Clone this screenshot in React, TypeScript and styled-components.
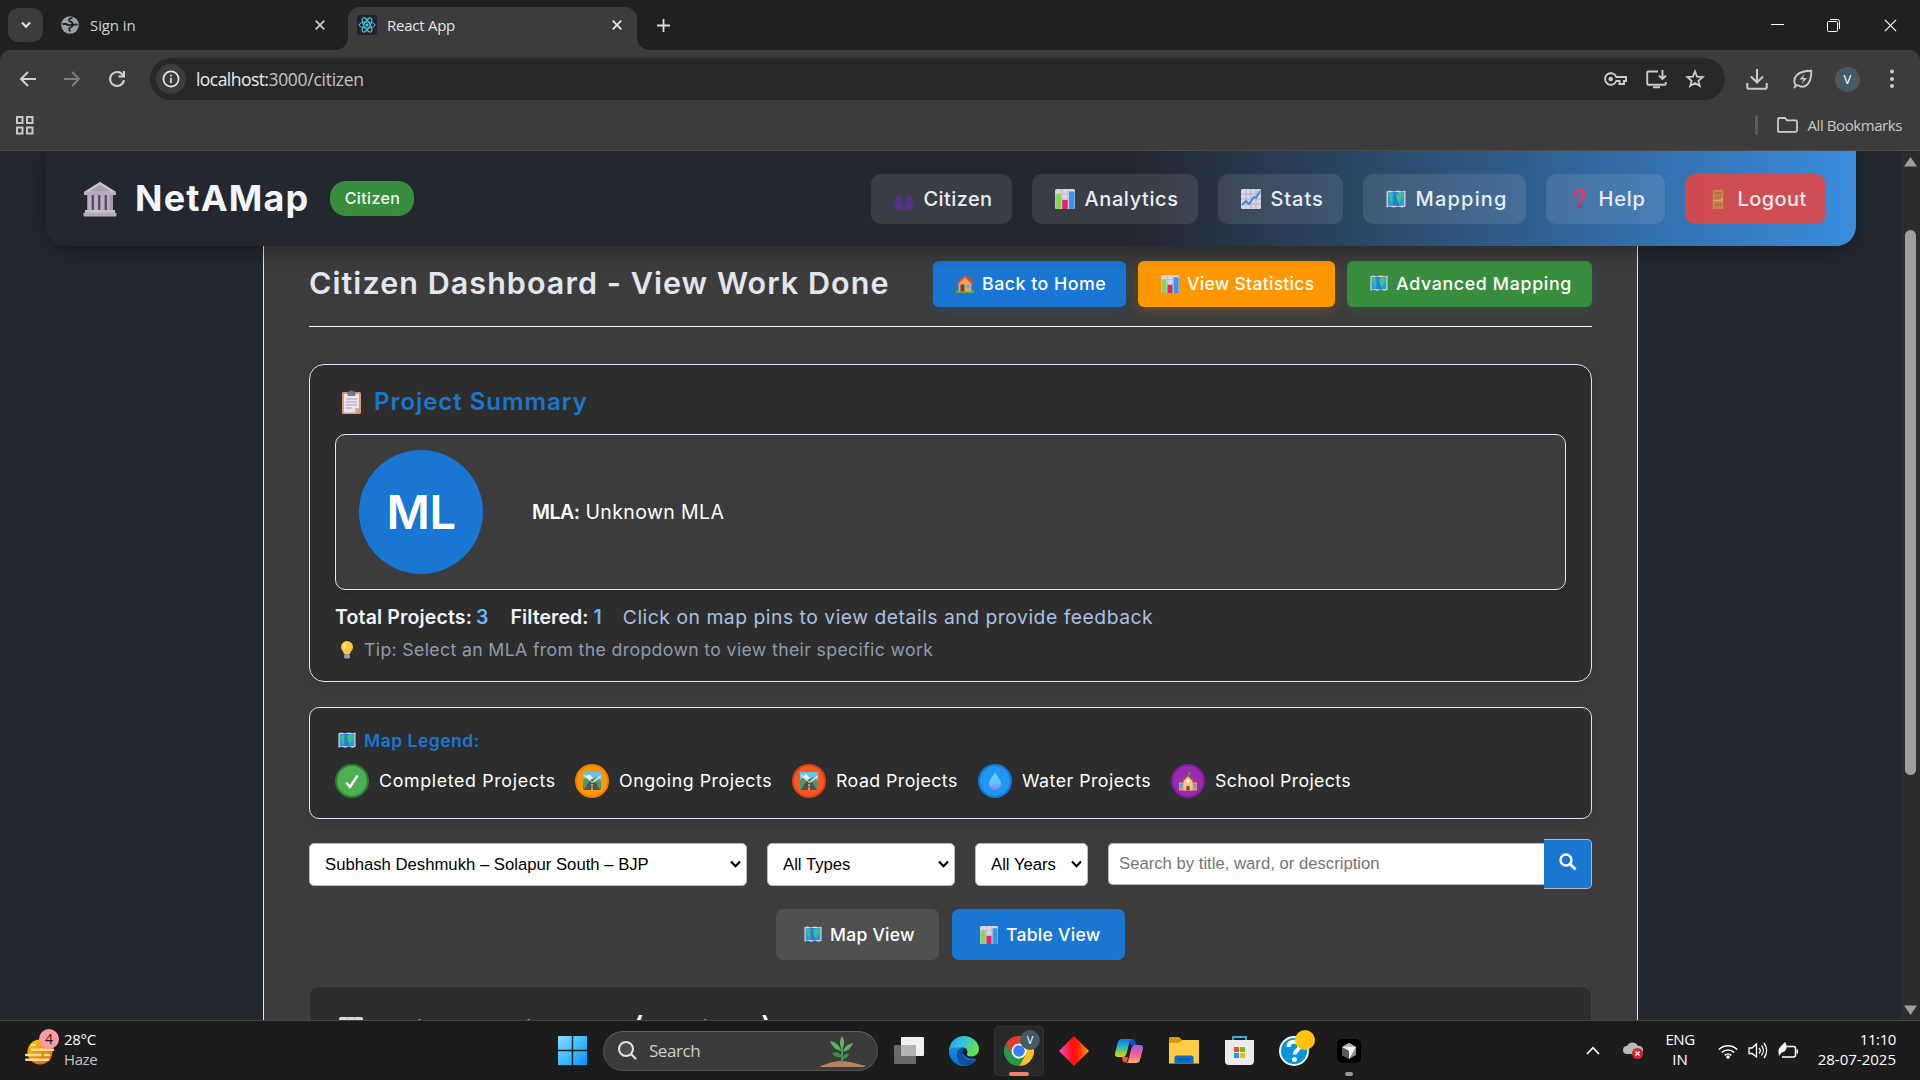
import React from "react";
import styled, { createGlobalStyle, css } from "styled-components";

const Global = createGlobalStyle`
  * { box-sizing: border-box; }
  html, body { margin: 0; background: #1c1c1c; overflow: hidden; }
  svg { display: block; flex: none; }
`;

const POP = `Inter, "Open Sans", sans-serif`;
const SEGOE = `"Open Sans", "Noto Sans", sans-serif`;
const ARIAL = `"Liberation Sans", Arial, sans-serif`;

const T = styled.span<{ $s: number; $w?: number; $c?: string; $ls?: number; $f?: string; $pt?: number; $pb?: number }>`
  font-family: ${(p) => p.$f || POP};
  font-size: ${(p) => p.$s}px;
  font-weight: ${(p) => p.$w || 400};
  color: ${(p) => p.$c || "#fff"};
  letter-spacing: ${(p) => p.$ls || 0}px;
  padding-top: ${(p) => p.$pt || 0}px;
  padding-bottom: ${(p) => p.$pb || 0}px;
  white-space: pre;
  line-height: 1.2;
`;

const Screen = styled.div`
  width: 1920px; height: 1080px; display: flex; flex-direction: column; overflow: hidden;
`;

/* ---------- browser chrome ---------- */
const TabStrip = styled.div`
  height: 50px; background: #1f2120; display: flex; padding-left: 8px; flex: none;
`;
const TabSearch = styled.div`
  width: 35px; height: 34px; margin-top: 8px; border-radius: 10px; background: #3c3c3c;
  display: grid; place-items: center;
`;
const Tab = styled.div<{ $active?: boolean }>`
  display: flex; align-items: center; height: 43px; margin-top: 7px; padding-bottom: 7px; position: relative;
  ${(p) => p.$active
    ? css`width: 289px; margin-left: 14px; padding-left: 9px; padding-right: 15px; border-radius: 12px 12px 0 0; background: #3c3c3c;
        &::before, &::after { content: ""; position: absolute; bottom: 0; width: 12px; height: 12px; }
        &::before { left: -12px; background: radial-gradient(circle at 0 0, transparent 11.5px, #3c3c3c 12px); }
        &::after { right: -12px; background: radial-gradient(circle at 100% 0, transparent 11.5px, #3c3c3c 12px); }`
    : css`width: 291px; padding-left: 18px; padding-right: 9px;`}
`;
const TabTitle = styled.div<{ $ml: number }>`flex: 1; display: flex; margin-left: ${(p) => p.$ml}px;`;
const Favicon = styled.div`
  width: 20px; height: 20px; border-radius: 3px; background: #20232a; display: grid; place-items: center;
`;
const NewTab = styled.div`width: 52px; display: grid; place-items: center;`;
const WinControls = styled.div`margin-left: auto; width: 172px; display: grid; grid-template-columns: 58px 55px 59px; place-items: center;`;

const ToolbarWrap = styled.div`background: #1f2120; height: 101px; flex: none;`;
const Toolbar = styled.div`
  height: 101px; background: #3c3c3c; border-radius: 10px 10px 0 0; border-bottom: 1px solid #4b4b4b;
`;
const NavRow = styled.div`display: flex; align-items: center; height: 58px;`;
const NavIcons = styled.div`width: 150px; display: flex; gap: 24px; padding-left: 18px;`;
const Omnibox = styled.div`
  width: 1575px; height: 42px; border-radius: 21px; background: #282828; display: flex; align-items: center;
  padding: 0 20px 0 6px;
`;
const InfoDot = styled.div`width: 30px; height: 30px; border-radius: 50%; background: #3c3c3c; display: grid; place-items: center; margin-right: 10px;`;
const OmniRight = styled.div`margin-left: auto; display: flex; align-items: center; gap: 18px;`;
const ToolRight = styled.div`display: flex; align-items: center; padding-left: 21px;`;
const Profile = styled.div<{ $d: number; $fs: number }>`
  width: ${(p) => p.$d}px; height: ${(p) => p.$d}px; border-radius: 50%; background: #455a64; color: #fff;
  display: grid; place-items: center; font: ${(p) => p.$fs}px ${SEGOE}; line-height: 1;
`;
const Bookmarks = styled.div`height: 42px; padding: 0 18px 8px 15px; display: flex; align-items: center;`;
const BmDivider = styled.div`width: 3px; height: 20px; border-radius: 2px; background: #5c5c5c; margin: 0 19px 0 auto;`;

/* ---------- page ---------- */
const Viewport = styled.div`height: 869px; flex: none; display: flex; background: #23272f; overflow: hidden;`;
const Page = styled.div`width: 1901px; height: 869px; overflow: hidden;`;
const AppNav = styled.nav`
  position: relative; z-index: 2;
  margin: 0 45px 0 46px; height: 95px; border-radius: 0 0 20px 20px; padding: 0 30px 0 35px;
  background: linear-gradient(90deg, #23272f 60%, #3a8dde 100%);
  box-shadow: 0 4px 20px rgba(0,0,0,.35);
  display: flex; align-items: center;
`;
const Badge = styled.div`
  width: 84px; height: 35px; border-radius: 16px; background: #388e3c; display: flex; align-items: center; justify-content: center; margin-left: 21px;
`;
const Menu = styled.div`margin-left: auto; display: flex; gap: 20px;`;
const MenuItem = styled.div<{ $wd: number; $danger?: boolean }>`
  width: ${(p) => p.$wd}px; height: 50px; border-radius: 10px; padding-left: 20px; display: flex; align-items: center; gap: 6.5px;
  background: ${(p) => (p.$danger ? "rgba(229,70,66,.87)" : "rgba(255,255,255,.1)")};
`;
const Slot = styled.div<{ $wd: number }>`width: ${(p) => p.$wd}px; display: flex; justify-content: center; flex: none;`;

const Container = styled.main`
  width: 1375px; height: 900px; margin-left: 263px; background: #3c3c3c; border: solid #e0e3ff; border-width: 0 1px;
  padding: 15px 45px 0;
`;
const HeaderRow = styled.div`display: flex; align-items: center; justify-content: space-between; height: 66px; padding-bottom: 20px; border-bottom: 1px solid #f0f2ff;`;
const HeaderButtons = styled.div`display: flex; gap: 12px;`;
const ActionBtn = styled.div<{ $wd: number; $bg: string; $glow: string }>`
  width: ${(p) => p.$wd}px; height: 46px; border-radius: 6px; background: ${(p) => p.$bg};
  box-shadow: 0 4px 12px ${(p) => p.$glow}; padding-left: 20px; display: flex; align-items: center; gap: 6px;
`;
const Card = styled.section<{ $h: number; $mt: number; $r: number }>`
  height: ${(p) => p.$h}px; margin-top: ${(p) => p.$mt}px; border-radius: ${(p) => p.$r}px; background: #2d2d2d;
  border: 1px solid #e0e3ff; padding: 0 25px; box-shadow: 0 3px 10px rgba(0,0,0,.12);
`;
const CardTitle = styled.div`height: 69px; display: flex; align-items: center; gap: 13px; padding: 5px 0 0 7px;`;
const MlaBox = styled.div`
  height: 156px; border: 1px solid #e0e3ff; border-radius: 10px; background: #3c3c3c; display: flex; align-items: center; padding-left: 23px;
  box-shadow: 0 3px 10px rgba(0,0,0,.12);
`;
const Avatar = styled.div`
  width: 124px; height: 124px; border-radius: 50%; background: #1976d2; display: grid; place-items: center; margin-right: 49px;
`;
const StatsRow = styled.div`height: 32px; margin-top: 12px; display: flex; align-items: center;`;
const Gap = styled.div<{ $wd: number }>`width: ${(p) => p.$wd}px; flex: none;`;
const TipRow = styled.div`height: 32px; display: flex; align-items: center; padding-left: 6px; gap: 11px;`;
const LegendTitle = styled.div`height: 30px; margin-top: 17px; display: flex; align-items: center; gap: 8px; padding-left: 3px;`;
const LegendRow = styled.div`display: flex; gap: 20px; margin-top: 9px;`;
const LegendItem = styled.div<{ $wd: number }>`width: ${(p) => p.$wd}px; display: flex; align-items: center; gap: 10px;`;
const Pin = styled.div<{ $bg: string; $bd: string }>`
  width: 34px; height: 34px; border-radius: 50%; background: ${(p) => p.$bg}; border: 2.5px solid ${(p) => p.$bd};
  display: grid; place-items: center; flex: none;
`;
const Filters = styled.div`display: flex; align-items: center; margin-top: 20px; height: 50px;`;
const Select = styled.div<{ $wd: number }>`
  width: ${(p) => p.$wd}px; height: 43px; margin-right: 20px; border: 1px solid #b9b9b9; border-radius: 5px; background: #fff;
  display: flex; align-items: center; justify-content: space-between; padding: 0 5px 0 15px;
`;
const SearchBox = styled.div`
  flex: 1; height: 42px; margin-bottom: 1px; background: #fff; border: 1px solid #b9b9b9; border-right: 0; border-radius: 5px 0 0 5px;
  display: flex; align-items: center; padding-left: 10px;
`;
const SearchBtn = styled.div`
  width: 48px; height: 50px; background: #1976d2; border: 1px solid #b9b9b9; border-left: 0; border-radius: 0 5px 5px 0;
  display: grid; place-items: center; padding-bottom: 5px;
`;
const ViewRow = styled.div`display: flex; justify-content: center; gap: 13px; margin-top: 20px;`;
const ViewBtn = styled.div<{ $wd: number; $bg: string }>`
  width: ${(p) => p.$wd}px; height: 51px; border-radius: 7px; background: ${(p) => p.$bg}; padding-left: 25px; display: flex; align-items: center; gap: 5px;
`;
const TableCard = styled.section`
  height: 120px; margin-top: 26px; border-radius: 10px; background: #2d2d2d; border: 1px solid #414141;
  padding: 28px 0 0 29px; display: flex; align-items: flex-start; gap: 12px;
`;
const TableIcon = styled.div`padding-top: 2px;`;
const Paren = styled.span`font-size: 31px; font-weight: 500; line-height: 0; letter-spacing: 0;`;
const ScrollBar = styled.div`
  width: 19px; background: #2c2c2c; display: flex; flex-direction: column; align-items: center; justify-content: space-between; padding: 6px 0 5px;
`;
const ScrollTop = styled.div`display: flex; flex-direction: column; align-items: center; gap: 63px;`;
const Thumb = styled.div`width: 11px; height: 545px; border-radius: 6px; background: #9f9f9f;`;

/* ---------- taskbar ---------- */
const Taskbar = styled.div`
  height: 60px; flex: none; background: #1c1c1c; border-top: 1px solid #434343; display: flex; align-items: center; padding: 0 24px 0 25px;
`;
const Weather = styled.div`display: flex; width: 533px; gap: 9px; align-items: center;`;
const Stack = styled.div<{ $a?: string }>`
  display: flex; flex-direction: column; height: 41px; padding-bottom: 2px; justify-content: space-between; align-items: ${(p) => p.$a || "flex-start"};
  & > span { height: 19px; line-height: 19px; }
`;
const SearchPill = styled.div`
  width: 275px; height: 40px; margin: 0 16px; border-radius: 20px; background: #3b3b3b; border: 1px solid #505050; border-top-color: #616161;
  display: flex; align-items: center; padding: 0 11px 0 14px;
`;
const PlantBox = styled.div`margin-left: auto;`;
const Apps = styled.div`display: flex; align-items: center; gap: 5px; margin-left: -10px;`;
const AppSlot = styled.div<{ $on?: boolean }>`
  width: 50px; height: 50px; border-radius: 5px; display: grid; place-items: center; position: relative;
  ${(p) => p.$on && "background:#292929; box-shadow: inset 0 0 0 1px #333;"}
`;
const RunDot = styled.div<{ $wd: number; $bg: string }>`
  position: absolute; bottom: 0; left: calc(50% - ${(p) => p.$wd / 2}px); width: ${(p) => p.$wd}px; height: 4px; border-radius: 2px; background: ${(p) => p.$bg};
`;
const Corner = styled.div<{ $t: number; $r: number }>`position: absolute; right: ${(p) => p.$r}px; top: ${(p) => p.$t}px;`;
const WeatherIcon = styled.div`position: relative;`;
const Count = styled.div`
  width: 20px; height: 20px; border-radius: 50%; background: #ff99a4; color: #1c1c1c; text-align: center; font: 14px/20px ${SEGOE};
`;
const Tray = styled.div`margin-left: auto; display: flex; align-items: center;`;

/* ---------- drawings ---------- */
const S = ({ w, h, vb, children }: any) => (
  <svg width={w} height={h} viewBox={vb || `0 0 ${w} ${h}`} fill="none">{children}</svg>
);
const X = ({ s = 10, c = "#dcdcdc", w = 1.8 }) => (
  <S w={s} h={s} vb="0 0 10 10"><path d="M.7 .7l8.600 8.600M9.300 .7L.7 9.300" stroke={c} strokeWidth={w} /></S>
);
const Globe = () => (
  <S w={18} h={18}><circle cx="9" cy="9" r="8.800" fill="#9aa0a6" />
    <path d="M11.500 2.200C9 2 7.500 3.200 8 4.500c.6 1.500 3.500 1 3.500 3 0 1.800-2.500 1.500-4 1.700-1.300.2-1.300-1.200-2.500-1.200H1.500M16.500 9c-1.500-1-4.500-.5-5 .8-.5 1.500-2 1.200-3 2.200-1 1.200.5 2 .3 3.700" stroke="#1f2120" strokeWidth="1.800" /></S>
);
const ReactLogo = () => (
  <S w={18} h={18} vb="-9 -9 18 18"><g stroke="#4fc3dc" strokeWidth="1" transform="rotate(0)"><ellipse rx="8" ry="3" /><ellipse rx="8" ry="3" transform="rotate(60)" /><ellipse rx="8" ry="3" transform="rotate(120)" /></g><circle r="1.600" fill="#4fc3dc" /></S>
);
const Bank = () => (
  <S w={34} h={36}><path d="M17 1L33 11v3H1v-3z" fill="#b7adbd" /><path d="M17 1L33 11H1z" fill="#c9c1cd" /><path d="M17 4l11 6.500H6z" fill="#a99fb1" />
    <rect x="4" y="14" width="26" height="17" fill="#5b4668" />
    {[4, 10.5, 17, 23.5].map((x) => <rect key={x} x={x + 0.4} y="14" width="4.200" height="16" fill="#b9afc0" />)}
    <rect x="26.500" y="14" width="3.500" height="16" fill="#a69bae" /><rect x="2" y="29" width="30" height="3" fill="#c9c0ce" /><rect x="0.500" y="31.500" width="33" height="4" rx="1" fill="#b4a8bb" /></S>
);
const People = () => (
  <S w={20} h={26}><g fill="#53318a"><circle cx="5" cy="12" r="3.300" /><circle cx="15" cy="12" r="3.300" /><path d="M.5 24v-4.500c0-3 1.500-4 4.500-4s4.500 1 4.500 4V24zM10.500 24v-4.500c0-3 1.500-4 4.500-4s4.500 1 4.500 4V24z" /></g></S>
);
const Bars = ({ s = 20 }) => (
  <S w={s} h={s} vb="0 0 20 20"><rect width="20" height="20" rx="1.500" fill="#dcd5e4" /><path d="M0 5h20M0 10h20M0 15h20M7 0v20M13 0v20" stroke="#b9aec6" strokeWidth=".7" />
    <rect x=".5" y="5" width="5.500" height="15" fill="#86d45c" /><rect x="7.200" y="11" width="5.500" height="9" fill="#e2246c" /><rect x="14" y="2.500" width="5.500" height="17.500" fill="#3597ea" /></S>
);
const Chart = () => (
  <S w={20} h={20}><rect width="20" height="20" rx="1.500" fill="#dcd5e4" /><path d="M0 5h20M0 10h20M0 15h20M5 0v20M10 0v20M15 0v20" stroke="#a99cba" strokeWidth=".7" />
    <path d="M1 16l4-4 3 3 5-7 2 1 4-7" stroke="#2f8be0" strokeWidth="1.800" /></S>
);
const MapIcon = ({ s = 20 }) => (
  <S w={s} h={s * 0.9} vb="0 0 20 18"><path d="M.5 1.500l3.300-1 4.200 1 4-1 4.200 1 3.300-1v16l-3.300 1-4.200-1-4 1-4.200-1-3.300 1z" fill="#d9cfe6" /><path d="M1.800 2.500L7 2l6 .5 5.200-.5v13.500l-5.200.5-6-.5-5.200.5z" fill="#2c9be6" /><path d="M7 2l6 .5V16l-6-.5z" fill="#2383d3" />
    <path d="M2.500 4l4-.7 1 1.700-2 2.500L7 9.500 6 13.500 4.500 11 4 8 2.500 6zM10.500 4l3-1 4 .5v4l-2 1-1 2.500-1.500 2-1.500-2-1-3.500z" fill="#3ec47e" /></S>
);
const Question = () => (
  <S w={13} h={20}><path d="M2 5.500C2 3 4 1.500 6.500 1.500S11.200 3 11.200 5.500c0 3-4.500 3.300-4.500 7" stroke="#f0325c" strokeWidth="3" strokeLinecap="round" /><circle cx="6.700" cy="17.600" r="1.900" fill="#e8213f" /></S>
);
const Door = () => (
  <S w={12} h={20}><rect width="12" height="20" fill="#b3693c" /><rect x="1" y="1" width="10" height="19" fill="#cb8352" /><path d="M2.500 3h7v2.500h-7zM2.500 7.500h7v2h-7zM2.500 14h7v3h-7z" fill="#b56f43" /><path d="M1 11.500h10" stroke="#e2a06c" /><circle cx="9.800" cy="10" r=".9" fill="#f6c24a" /></S>
);
const House = () => (
  <S w={18} h={18}><rect y="15.500" width="18" height="2.500" fill="#57a84f" /><path d="M2.500 8L9 2l6.500 6v8.500h-13z" fill="#efa35d" /><path d="M13 1h2.500v5L13 4z" fill="#b9503c" /><path d="M.8 9L9 1.200 17.200 9" stroke="#d6552f" strokeWidth="2" /><rect x="4.500" y="9.500" width="4" height="7" fill="#7b4030" /><rect x="10.500" y="9.500" width="3.800" height="3.800" fill="#4fb2ee" /></S>
);
const Clipboard = () => (
  <S w={19} h={24}><rect y="2" width="19" height="22" rx="1.500" fill="#dd9a6b" /><path d="M2 4h15v14l-4 4.500H2z" fill="#ece4f2" /><path d="M17 18h-4v4.500z" fill="#bfaecb" /><rect x="5.500" y="1.500" width="8" height="4.500" rx="1" fill="#7f7484" /><circle cx="9.500" cy="1.800" r="1.500" fill="#7f7484" /><path d="M4 9h11M4 12h11M4 15h11M4 18h6" stroke="#a79bb2" /></S>
);
const Bulb = () => (
  <S w={12} h={18}><path d="M6 0a6 6 0 0 1 6 6c0 3-2.500 4-3 7H3C2.500 10 0 9 0 6a6 6 0 0 1 6-6z" fill="#ffc83d" /><path d="M6 1.500c-2.500 0-4 2-4 4.500l2 3 1-6z" fill="#ffe68a" /><rect x="3" y="13" width="6" height="4.500" rx="1.500" fill="#a692b5" /></S>
);
const Road = () => (
  <S w={18} h={18}><rect width="18" height="18" fill="#62c5f2" /><path d="M0 8l5-4 4 3 4-2 5 4v9H0z" fill="#4a9a62" /><path d="M2 5l4-3 4 4-2 3z" fill="#e7f4fb" /><path d="M7.500 7.500h3L17 18H1z" fill="#50505c" /><path d="M9 9v2M9 12v2.500M9 15.500V18" stroke="#ffcf3a" strokeWidth="1.300" /><path d="M1 3l7 6M18 4l-8 6" stroke="#d8dde2" strokeWidth="1.600" /></S>
);
const Check = () => <S w={14} h={15}><path d="M1.300 8.500L5 13 12.500 1.500" stroke="#fff" strokeWidth="2.400" /></S>;
const Drop = () => (
  <S w={14} h={18}><defs><linearGradient id="dr" x2="0" y2="1"><stop stopColor="#5ed0fb" /><stop offset=".6" stopColor="#69c3fb" /><stop offset="1" stopColor="#7c86f2" /></linearGradient></defs><path d="M7 0c1 3.500 6 7 6 11.500A6 6 0 0 1 7 18a6 6 0 0 1-6-6.500C1 7 6 3.500 7 0z" fill="url(#dr)" /></S>
);
const School = () => (
  <S w={18} h={19}><path d="M9 0v5" stroke="#7a4b39" /><path d="M9 .5h3v2H9z" fill="#3ea557" /><rect x="0" y="10" width="18" height="8.500" fill="#e59a63" /><path d="M4.500 8L9 3.500 13.500 8v10.500h-9z" fill="#f6c492" /><path d="M4 8.500L9 3.500l5 5M0 9.800h4.500M13.500 9.800H18" stroke="#a55a3d" strokeWidth="1.300" /><circle cx="9" cy="9" r="1.600" fill="#fff" /><path d="M7.300 14h3.400v4.500H7.300z" fill="#96482f" /><path d="M1 12h2.500v4H1zM14.500 12H17v4h-2.500z" fill="#45a8e6" /></S>
);
const Chevron = () => <S w={11} h={8}><path d="M1 1.500l4.500 4.700L10 1.500" stroke="#000" strokeWidth="2.200" /></S>;
const Win = () => (
  <S w={29} h={29}><defs><linearGradient id="wn" x2="1" y2="1"><stop stopColor="#86dcff" /><stop offset=".5" stopColor="#40bdfb" /><stop offset="1" stopColor="#0a90fb" /></linearGradient></defs><path d="M0 0h13.800v13.800H0zM15.200 0H29v13.800H15.200zM0 15.200h13.800V29H0zM15.200 15.200H29V29H15.200z" fill="url(#wn)" /></S>
);
const Plant = () => (
  <S w={46} h={32}><path d="M0 31c6-1 10-5 21-5s16 4 25 4.500l-2 1.500H1z" fill="#b98261" /><path d="M22 28V12" stroke="#3f9b4b" strokeWidth="2" /><g fill="#5db65c"><path d="M22 1c3 5 2.500 9 0 13-2.500-4-3-8 0-13z" /><path d="M10 6c6 1 9 4 11.500 10C15 15 12 11 10 6z" /><path d="M33 8c-5 1-8 3-10 8.500 6-.5 8-4 10-8.500z" /></g><g fill="#3a8f49"><path d="M12 18c5-2 8 0 10 4-4 1-8 0-10-4z" /><path d="M29 19c-4-1-6 1-7 5 4 0 6-2 7-5z" /></g></S>
);
const TaskView = () => (
  <S w={30} h={27}><rect y="8" width="22" height="19" rx="1" fill="#6a6a6a" /><rect x="7" width="23" height="19" rx="1" fill="#f1f1f1" /><rect x="7" y="8" width="15" height="11" fill="#b4b4b4" /></S>
);
const Edge = () => (
  <S w={30} h={30}><defs><linearGradient id="e1" x2="1" y2=".4"><stop stopColor="#1b9de2" /><stop offset=".5" stopColor="#33c3dd" /><stop offset="1" stopColor="#62e04f" /></linearGradient><linearGradient id="e2" x2="0" y2="1"><stop stopColor="#1a8fe0" /><stop offset="1" stopColor="#0a6fd0" /></linearGradient></defs>
    <path d="M0 13A15 15 0 0 0 15 30c5 0 9-2 12-6L22 15 4 8z" fill="url(#e2)" /><path d="M0 14C1 5 7.500 0 15 0c8 0 15 6 15 13 0 5-4 7.500-8 7.500-3.500 0-5-1.500-4-3 1.500-2.500-.5-6-4-6C8 11.500 2 11 0 14z" fill="url(#e1)" /><path d="M13 11.500c-5 1.500-6 7-4.500 11.500 2 5 6 7.300 10 6.500 4-1 7-4 8.500-6.500-8 3-13-1-12.500-6 0-1.500.5-2.500 1.500-3.500z" fill="#0c4f9e" /><path d="M14.500 12.500c-1.500 2-1 8 6 10 3 .7 5.500 0 7.500-1l1.500-3.500c-2 2-4.500 2.500-7.500 2.500-3.500 0-5-1.500-4-3 1.200-2-.5-5-3.500-5z" fill="#1c1c1c" /></S>
);
const ChromeLogo = () => (
  <S w={30} h={30} vb="-15 -15 30 30">
    <path d="M0-7.500H13A15 15 0 0 1 0 15L6.500 3.700z" fill="#fcc31e" />
    <path d="M-6.500 3.700L-13-7.500A15 15 0 0 0 0 15L6.500 3.700z" fill="#279847" />
    <path d="M0-7.500H13A15 15 0 0 0-13-7.500L-6.500 3.700z" fill="#e33b2e" />
    <circle r="7.500" fill="#fff" /><circle r="5.800" fill="#3a7ff0" /></S>
);
const Diamond = () => (
  <S w={30} h={30}><defs><linearGradient id="dm"><stop stopColor="#f14fd0" /><stop offset=".45" stopColor="#fb0f10" /><stop offset=".6" stopColor="#fb1a08" /><stop offset="1" stopColor="#fba70c" /></linearGradient></defs><path d="M15 0l15 15-15 15L0 15z" fill="url(#dm)" /></S>
);
const Copilot = () => (
  <S w={28} h={26}><defs><linearGradient id="c1" x2="0" y2="1"><stop stopColor="#1a74e0" /><stop offset=".4" stopColor="#1fb1d8" /><stop offset=".7" stopColor="#7ecb5a" /><stop offset="1" stopColor="#f3c71d" /></linearGradient><linearGradient id="c2" x2="0" y2="1"><stop stopColor="#a35bea" /><stop offset=".5" stopColor="#ee5ba2" /><stop offset="1" stopColor="#fcae68" /></linearGradient></defs>
    <path d="M14 1h4c2 0 2.500 3 3.500 6h-6z" fill="#174bbd" /><path d="M7 19h6l-1 5c-3 1.500-4.500 0-5-5z" fill="#ee5a36" /><path d="M7 1h9c-3 3-3 17-7 18H3c-3 0-3.500-2-2.700-5L3 4c.8-2.200 2-3 4-3z" fill="url(#c1)" /><path d="M21 25h-9c3-3 3-17 7-18h6c3 0 3.500 2 2.700 5L25 22c-.8 2.200-2 3-4 3z" fill="url(#c2)" /></S>
);
const Folder = () => (
  <S w={30} h={27}><path d="M0 1.500C0 .5.700 0 1.500 0H10l3 3h-1l-2 4H0z" fill="#d99a07" /><path d="M0 6l10-.3L12.500 3H29c.6 0 1 .4 1 1v22.500H0z" fill="#fdcb45" /><path d="M5.500 26.500v-6c0-1 .8-2 2-2h15c1.200 0 2 1 2 2v6z" fill="#0f6fc4" /><path d="M9 22.500h12" stroke="#0a4e94" strokeWidth="1.300" /></S>
);
const Store = () => (
  <S w={29} h={29}><path d="M8 5V1h13v4" stroke="#27b5e8" strokeWidth="1.800" /><path d="M0 4h29v21a4 4 0 0 1-4 4H4a4 4 0 0 1-4-4z" fill="#ececec" /><path fill="#f25022" d="M9 11h5v5H9z" /><path fill="#7fba00" d="M15 11h5v5h-5z" /><path fill="#00a4ef" d="M9 17h5v5H9z" /><path fill="#ffb900" d="M15 17h5v5h-5z" /></S>
);
const HelpIcon = () => (
  <S w={30} h={30}><circle cx="15" cy="15" r="14" fill="#0695dc" stroke="#f3f3f3" strokeWidth="2" /><path d="M9.500 11c0-3.500 2.200-5.300 5.500-5.300s5.500 1.800 5.500 4.800c0 4-5 3.800-5 8" stroke="#fff" strokeWidth="4" /><circle cx="15.400" cy="23.500" r="2.500" fill="#fff" /></S>
);
const CursorApp = () => (
  <S w={24} h={24}><rect width="24" height="24" rx="5" fill="#000" /><path d="M12 4l7 4v8l-7 4-7-4V8z" fill="#8f8f8f" /><path d="M5 8h14l-7 12v-8z" fill="#f2f2f2" /><path d="M12 4l7 4H5z" fill="#b5b5b5" /><path d="M5 8l7 4v8l-7-4z" fill="#5b5b5b" /></S>
);
const Sun = () => (
  <S w={30} h={28}><defs><linearGradient id="sn" x2=".7" y2="1"><stop stopColor="#ffcf0a" /><stop offset="1" stopColor="#e06a08" /></linearGradient></defs><circle cx="15" cy="15" r="12.500" fill="url(#sn)" /><g stroke="#f7dc98" strokeWidth="2.600" strokeLinecap="round"><path d="M7 8h3M7 12.800h21M1.300 18h14M20 18h4M1.300 22.800h22" /></g></S>
);

const C = "#c9cbce";

export default function App() {
  return (
    <>
      <Global />
      <Screen>
        <TabStrip>
          <TabSearch><S w={10} h={8}><path d="M1 1.500l4 4.200 4-4.200" stroke="#e3e3e3" strokeWidth="2" /></S></TabSearch>
          <Tab><Globe /><TabTitle $ml={11}><T $f={SEGOE} $s={15} $c="#cfd0d0" $ls={-0.1}>Sign in</T></TabTitle><X c="#c9c9c9" /></Tab>
          <Tab $active><Favicon><ReactLogo /></Favicon><TabTitle $ml={10}><T $f={SEGOE} $s={15} $c="#e6e6e6" $ls={-0.25}>React App</T></TabTitle><X c="#e6e6e6" /></Tab>
          <NewTab><S w={13} h={13}><path d="M6.500 0v13M0 6.500h13" stroke="#dcdcdc" strokeWidth="1.800" /></S></NewTab>
          <WinControls>
            <S w={13} h={13}><path d="M0 5.500h13" stroke="#fff" /></S>
            <S w={13} h={13}><rect x=".5" y="2.500" width="10" height="10" rx="1" stroke="#fff" /><path d="M3 .5h7.500a2 2 0 0 1 2 2V10" stroke="#fff" /></S>
            <X s={13} c="#fff" w={0.9} />
          </WinControls>
        </TabStrip>
        <ToolbarWrap>
          <Toolbar>
            <NavRow>
              <NavIcons>
                <S w={20} h={20}><path d="M18 10H3.500M10 3l-7 7 7 7" stroke="#d0d0d0" strokeWidth="2" /></S>
                <S w={20} h={20}><path d="M2 10h14.500M10 3l7 7-7 7" stroke="#7e7e7e" strokeWidth="2" /></S>
                <S w={22} h={20}><path d="M17 6.200A7 7 0 1 0 18 11M18 2v5.500h-5.500" stroke="#d0d0d0" strokeWidth="2" /></S>
              </NavIcons>
              <Omnibox>
                <InfoDot><S w={18} h={18}><circle cx="9" cy="9" r="7.600" stroke="#e3e3e3" strokeWidth="1.700" /><path d="M9 8v5M9 4.800v1.800" stroke="#e3e3e3" strokeWidth="1.700" /></S></InfoDot>
                <T $f={SEGOE} $s={17.5} $c="#ececec" $ls={-0.55} $pt={1}>localhost:</T><T $f={SEGOE} $s={17.5} $c="#c4c4c4" $ls={-0.28} $pt={1}>3000/citizen</T>
                <OmniRight>
                  <S w={24} h={14}><path d="M12.300 5H22v4h-2v3h-4.500V9h-3.200A5.800 5.800 0 1 1 12.300 5z" stroke={C} strokeWidth="1.900" /><circle cx="6.700" cy="7" r="2.300" fill={C} /></S>
                  <S w={21} h={19}><path d="M12 1.500H2.500A1.300 1.300 0 0 0 1.200 3v10.500a1.300 1.300 0 0 0 1.300 1.300h16a1.300 1.300 0 0 0 1.300-1.300V12M7 17.300h7M16.500 0v8.500M13 5.500L16.500 9 20 5.500" stroke={C} strokeWidth="1.900" /></S>
                  <S w={20} h={20}><path d="M10 2.500l2.100 5.200 5.600.4-4.300 3.600 1.400 5.400L10 14.100l-4.800 3 1.400-5.400-4.300-3.600 5.600-.4z" stroke={C} strokeWidth="1.800" /></S>
                </OmniRight>
              </Omnibox>
              <ToolRight>
                <S w={22} h={21}><path d="M11 0v13M5 7.500l6 6 6-6M1.300 14v4.500c0 .8.500 1.200 1.200 1.200h17c.7 0 1.200-.4 1.200-1.200V14" stroke={C} strokeWidth="2.100" /></S>
                <Gap $wd={25} />
                <S w={20} h={20}><path d="M2.500 16.500C-1 9 3.500 2 18.300 1.800 18.500 15 11.500 21 4.500 16M1 19c1-1 1.800-2.500 3.500-3" stroke={C} strokeWidth="1.900" /><path d="M11.500 5l-5 5.500h4l-2 4.500 5.500-6h-4z" fill={C} /></S>
                <Gap $wd={22} /><Profile $d={25} $fs={13}>V</Profile><Gap $wd={30} />
                <S w={4} h={20}><g fill={C}><circle cx="2" cy="2.500" r="2" /><circle cx="2" cy="10" r="2" /><circle cx="2" cy="17" r="2" /></g></S>
              </ToolRight>
            </NavRow>
            <Bookmarks>
              <S w={19} h={19}><path d="M2 1h5.500v6H2zM12 1h5.500v6H12zM2 11.500h5.500v6H2zM12 11.500h5.500v6H12z" stroke="#c7c7c7" strokeWidth="2" /></S>
              <BmDivider />
              <S w={21} h={16}><path d="M1 2.300C1 1.500 1.500 1 2.300 1H8l2 2.300h8.700c.8 0 1.300.5 1.300 1.300v9c0 .8-.5 1.300-1.300 1.300H2.300C1.500 15 1 14.500 1 13.700z" stroke={C} strokeWidth="1.800" /></S>
              <Gap $wd={10} /><T $f={SEGOE} $s={15} $c="#c9c9c9" $ls={-0.42} $pb={1}>All Bookmarks</T>
            </Bookmarks>
          </Toolbar>
        </ToolbarWrap>

        <Viewport>
          <Page>
            <AppNav>
              <Slot $wd={38}><Bank /></Slot><Gap $wd={16} />
              <T $s={36} $w={700} $c="#f1f5fd" $ls={1.2} $pt={1}>NetAMap</T>
              <Badge><T $s={16} $w={500} $c="#f1f5fd" $ls={0.35}>Citizen</T></Badge>
              <Menu>
                <MenuItem $wd={141}><Slot $wd={26}><People /></Slot><T $s={20} $w={500} $c="#e8edf5" $ls={0.4} $pt={1}>Citizen</T></MenuItem>
                <MenuItem $wd={166}><Slot $wd={26}><Bars /></Slot><T $s={20} $w={500} $c="#e8edf5" $ls={0.6} $pt={1}>Analytics</T></MenuItem>
                <MenuItem $wd={125}><Slot $wd={26}><Chart /></Slot><T $s={20} $w={500} $c="#e8edf5" $ls={0.9} $pt={1}>Stats</T></MenuItem>
                <MenuItem $wd={163}><Slot $wd={26}><MapIcon /></Slot><T $s={20} $w={500} $c="#e8edf5" $ls={1.2} $pt={1}>Mapping</T></MenuItem>
                <MenuItem $wd={119}><Slot $wd={26}><Question /></Slot><T $s={20} $w={500} $c="#e8edf5" $ls={0.8} $pt={1}>Help</T></MenuItem>
                <MenuItem $wd={141} $danger><Slot $wd={26}><Door /></Slot><T $s={20} $w={500} $c="#f1e9ee" $ls={0.4} $pt={1}>Logout</T></MenuItem>
              </Menu>
            </AppNav>
            <Container>
              <HeaderRow>
                <T $s={30.5} $w={600} $c="#e2e6ef" $ls={1.05} $pb={1}>Citizen Dashboard - View Work Done</T>
                <HeaderButtons>
                  <ActionBtn $wd={193} $bg="#1976d2" $glow="rgba(25,118,210,.2)"><Slot $wd={23}><House /></Slot><T $s={17.8} $w={500} $ls={0.5}>Back to Home</T></ActionBtn>
                  <ActionBtn $wd={197} $bg="#ff9800" $glow="rgba(255,152,0,.2)"><Slot $wd={23}><Bars s={18} /></Slot><T $s={17.5} $w={500} $ls={0.3}>View Statistics</T></ActionBtn>
                  <ActionBtn $wd={245} $bg="#388e3c" $glow="rgba(56,142,60,.2)"><Slot $wd={23}><MapIcon s={18} /></Slot><T $s={17.8} $w={500} $ls={0.66}>Advanced Mapping</T></ActionBtn>
                </HeaderButtons>
              </HeaderRow>

              <Card $h={318} $mt={37} $r={15}>
                <CardTitle><Clipboard /><T $s={24} $w={600} $c="#1976d2" $ls={0.96}>Project Summary</T></CardTitle>
                <MlaBox>
                  <Avatar><T $s={47} $w={600} $ls={-0.5}>ML</T></Avatar>
                  <T $s={19.5} $w={600} $ls={-0.5} $pt={2}>MLA:</T><Gap $wd={6} /><T $s={19.5} $ls={0.38} $pt={2}>Unknown MLA</T>
                </MlaBox>
                <StatsRow>
                  <T $s={19.5} $w={600} $c="#f0f4ff" $ls={0.15}>Total Projects:</T><Gap $wd={4} /><T $s={19.5} $w={600} $c="#6cb8f7">3</T><Gap $wd={22} />
                  <T $s={19.5} $w={600} $c="#f0f4ff" $ls={0.07}>Filtered:</T><Gap $wd={5} /><T $s={19.5} $w={600} $c="#6cb8f7">1</T><Gap $wd={21} />
                  <T $s={19.3} $c="#a9c1e2" $ls={0.53}>Click on map pins to view details and provide feedback</T>
                </StatsRow>
                <TipRow><Bulb /><T $s={17.7} $c="#8f9cae" $ls={0.35} $pb={1}>Tip: Select an MLA from the dropdown to view their specific work</T></TipRow>
              </Card>

              <Card $h={112} $mt={25} $r={10}>
                <LegendTitle><MapIcon s={18} /><T $s={17.5} $w={600} $c="#1976d2" $ls={0.5}>Map Legend:</T></LegendTitle>
                <LegendRow>
                  <LegendItem $wd={220}><Pin $bg="#4caf50" $bd="#2e7d32"><Check /></Pin><T $s={17.8} $ls={0.66} $pb={1}>Completed Projects</T></LegendItem>
                  <LegendItem $wd={197}><Pin $bg="#ff9800" $bd="#f57c00"><Road /></Pin><T $s={17.8} $ls={0.53} $pb={1}>Ongoing Projects</T></LegendItem>
                  <LegendItem $wd={166}><Pin $bg="#ff5722" $bd="#d84315"><Road /></Pin><T $s={17.8} $ls={0.43} $pb={1}>Road Projects</T></LegendItem>
                  <LegendItem $wd={173}><Pin $bg="#2196f3" $bd="#1976d2"><Drop /></Pin><T $s={17.8} $ls={0.47} $pb={1}>Water Projects</T></LegendItem>
                  <LegendItem $wd={180}><Pin $bg="#9c27b0" $bd="#7b1fa2"><School /></Pin><T $s={17.8} $ls={0.33} $pb={1}>School Projects</T></LegendItem>
                </LegendRow>
              </Card>

              <Filters>
                <Select $wd={438}><T $f={ARIAL} $s={16.7} $c="#000" $pt={2}>Subhash Deshmukh – Solapur South – BJP</T><Chevron /></Select>
                <Select $wd={188}><T $f={ARIAL} $s={16.7} $c="#000" $pt={2}>All Types</T><Chevron /></Select>
                <Select $wd={113}><T $f={ARIAL} $s={16.7} $c="#000" $pt={2}>All Years</T><Chevron /></Select>
                <SearchBox><T $f={ARIAL} $s={16.7} $c="#757575" $pt={1}>Search by title, ward, or description</T></SearchBox>
                <SearchBtn><S w={18} h={18}><circle cx="7" cy="7" r="5.500" stroke="#fff" strokeWidth="2.400" /><path d="M11 11l5.500 5.500" stroke="#fff" strokeWidth="2.800" /></S></SearchBtn>
              </Filters>

              <ViewRow>
                <ViewBtn $wd={163} $bg="#505050"><Slot $wd={24}><MapIcon s={18} /></Slot><T $s={17.5} $w={500} $ls={0.25}>Map View</T></ViewBtn>
                <ViewBtn $wd={173} $bg="#1976d2"><Slot $wd={24}><Bars s={18} /></Slot><T $s={17.5} $w={500} $ls={0.3}>Table View</T></ViewBtn>
              </ViewRow>

              <TableCard>
                <TableIcon><Bars s={24} /></TableIcon>
                <T $s={25.2} $w={600} $ls={0.1}>Project Details Table <Paren>(</Paren>1 projects<Paren>)</Paren></T>
              </TableCard>
            </Container>
          </Page>
          <ScrollBar>
            <ScrollTop>
              <S w={13} h={10}><path d="M6.500 0L13 9.500H0z" fill="#9f9f9f" /></S>
              <Thumb />
            </ScrollTop>
            <S w={13} h={10}><path d="M6.500 10L13 .5H0z" fill="#9f9f9f" /></S>
          </ScrollBar>
        </Viewport>

        <Taskbar>
          <Weather>
            <WeatherIcon><Sun /><Corner $r={-4} $t={-8}><Count>4</Count></Corner></WeatherIcon>
            <Stack><T $f={SEGOE} $s={15} $ls={-0.3}>28°C</T><T $f={SEGOE} $s={15} $c="#c4c4c4" $ls={-0.4}>Haze</T></Stack>
          </Weather>
          <Win />
          <SearchPill>
            <S w={19} h={19}><circle cx="8" cy="8" r="7" stroke="#e4e4e4" strokeWidth="2" fill="#4c4c4c" /><path d="M13 13l5 5" stroke="#e4e4e4" strokeWidth="2.300" /></S>
            <Gap $wd={12} /><T $f={SEGOE} $s={17} $c="#cfcfcf" $ls={-0.45} $pt={1}>Search</T><PlantBox><Plant /></PlantBox>
          </SearchPill>
          <Apps>
            <AppSlot><TaskView /></AppSlot>
            <AppSlot><Edge /></AppSlot>
            <AppSlot $on><ChromeLogo /><Corner $r={4} $t={4}><Profile $d={20} $fs={11}>V</Profile></Corner><RunDot $wd={20} $bg="#f08068" /></AppSlot>
            <AppSlot><Diamond /></AppSlot>
            <AppSlot><Copilot /></AppSlot>
            <AppSlot><Folder /></AppSlot>
            <AppSlot><Store /></AppSlot>
            <AppSlot><HelpIcon /><Corner $r={4} $t={4}><S w={20} h={20}><circle cx="10" cy="10" r="10" fill="#ffc20e" /></S></Corner></AppSlot>
            <AppSlot><CursorApp /><RunDot $wd={8} $bg="#9a9a9a" /></AppSlot>
          </Apps>
          <Tray>
            <S w={14} h={9}><path d="M1 8l6-6.300L13 8" stroke="#fff" strokeWidth="1.800" /></S><Gap $wd={23} />
            <S w={20} h={17}><path d="M4 12a4 4 0 0 1 0-8 6 6 0 0 1 11 0 4 4 0 0 1 2 8z" fill="#b9b9b9" /><circle cx="14.500" cy="11.500" r="5.500" fill="#d8232f" /><path d="M12.500 9.500l4 4M16.500 9.500l-4 4" stroke="#fff" strokeWidth="1.300" /></S><Gap $wd={22} />
            <Stack $a="center"><T $f={SEGOE} $s={15} $ls={-0.4}>ENG</T><T $f={SEGOE} $s={15}>IN</T></Stack><Gap $wd={23} />
            <S w={20} h={16}><path d="M.8 6.500a13 13 0 0 1 18.400 0M3.800 9.500a8.800 8.800 0 0 1 12.400 0M6.700 12.400a4.700 4.700 0 0 1 6.600 0" stroke="#fff" strokeWidth="1.500" /><circle cx="10" cy="14" r="1.800" fill="#fff" /></S><Gap $wd={10} />
            <S w={20} h={17}><path d="M1 6h3l4.500-4v13L4 11.500H1z" stroke="#fff" strokeWidth="1.300" /><path d="M11 6a4 4 0 0 1 0 5.500M13.500 3.500a8 8 0 0 1 0 10M16 1a12 12 0 0 1 0 15" stroke="#fff" strokeWidth="1.300" /></S><Gap $wd={10} />
            <S w={20} h={17}><path d="M8 4.500h7.500a2 2 0 0 1 2 2v6.500a2 2 0 0 1-2 2H4" stroke="#fff" strokeWidth="1.500" /><path d="M19.200 7.500v4" stroke="#fff" strokeWidth="1.600" /><path d="M7 0c3 4 2 10-3.500 10.500L1 14l-.5-4C0 6 3 4.500 7 0z" fill="#fff" /></S><Gap $wd={20} />
            <Stack $a="flex-end"><T $f={SEGOE} $s={15} $ls={-0.4}>11:10</T><T $f={SEGOE} $s={15}>28-07-2025</T></Stack>
          </Tray>
        </Taskbar>
      </Screen>
    </>
  );
}
